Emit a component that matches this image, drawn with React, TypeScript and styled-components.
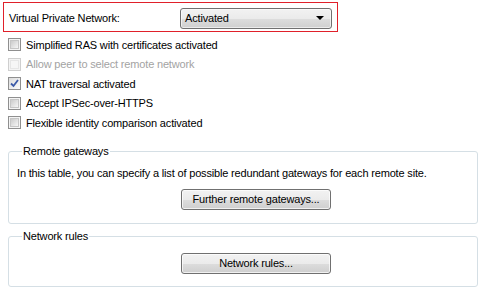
import React from "react";
import styled, { createGlobalStyle } from "styled-components";

const Global = createGlobalStyle`
  html, body { margin: 0; padding: 0; background: #ffffff; }
  body { font-family: "Liberation Sans", Arial, sans-serif; font-size: 11px; color: #000; letter-spacing: -0.17px; }
`;

const Page = styled.div`
  width: 481px;
  height: 291px;
  box-sizing: border-box;
  padding: 2px 3px 0 3px;
  display: flex;
  flex-direction: column;
`;

const Highlight = styled.div`
  width: 335px;
  height: 30px;
  box-sizing: border-box;
  border: 1px solid #e0202a;
  display: flex;
  align-items: center;
  padding: 0 5px 0 5px;
  justify-content: space-between;
`;

const Label = styled.span`
  font-size: 11px;
  padding-top: 1px;
`;

const Select = styled.div`
  width: 152px;
  height: 21px;
  box-sizing: border-box;
  border: 1px solid #707070;
  border-radius: 3px;
  background: linear-gradient(#f2f2f2 0%, #ebebeb 50%, #dddddd 51%, #cfcfcf 100%);
  display: flex;
  align-items: center;
  justify-content: space-between;
  padding: 0 7px 0 4px;
  margin-top: 2px;
  box-shadow: inset 0 0 0 1px rgba(255,255,255,0.6);
`;

const Arrow = styled.span`
  width: 0;
  height: 0;
  border-left: 4px solid transparent;
  border-right: 4px solid transparent;
  border-top: 4px solid #000;
`;

const Checks = styled.div`
  display: flex;
  flex-direction: column;
  padding: 3px 0 0 5px;
`;

const Row = styled.label<{ $disabled?: boolean }>`
  height: 19.5px;
  display: flex;
  align-items: center;
  gap: 5px;
  color: ${(p) => (p.$disabled ? "#a3a3a3" : "#000")};
`;

const Box = styled.span<{ $disabled?: boolean }>`
  width: 13px;
  height: 13px;
  box-sizing: border-box;
  border: 1px solid ${(p) => (p.$disabled ? "#cfcfcf" : "#8f8f8f")};
  background: #f4f4f4;
  display: flex;
  align-items: center;
  justify-content: center;
  flex: none;
  &::before {
    content: "";
    width: 9px;
    height: 9px;
    box-sizing: border-box;
    border: 1px solid ${(p) => (p.$disabled ? "#e6e6e6" : "#c6c6c6")};
    background: ${(p) =>
      p.$disabled ? "#f6f6f6" : "linear-gradient(135deg, #cbcbcb, #f6f6f6)"};
  }
`;

const CheckedBox = styled.span`
  width: 13px;
  height: 13px;
  box-sizing: border-box;
  border: 1px solid #8f8f8f;
  background: linear-gradient(135deg, #dcdcdc, #fafafa);
  display: flex;
  align-items: center;
  justify-content: center;
  flex: none;
`;

const Group = styled.fieldset<{ $h: number; $mt: number }>`
  margin: ${(p) => p.$mt}px 0 0 5px;
  width: 470px;
  height: ${(p) => p.$h}px;
  box-sizing: border-box;
  border: 1px solid #d5dfe5;
  border-radius: 3px;
  padding: 0 8px;
  display: flex;
  flex-direction: column;
  align-items: flex-start;
`;

const Legend = styled.legend`
  font-size: 11px;
  padding: 0 1px;
  margin-left: 5px;
  line-height: 13px;
`;

const Text = styled.p`
  margin: 9px 0 0 0;
  line-height: 13px;
`;

const ButtonRow = styled.div<{ $mt: number }>`
  width: 100%;
  display: flex;
  justify-content: flex-start;
  padding-left: 164px;
  box-sizing: border-box;
  margin-top: ${(p) => p.$mt}px;
`;

const Button = styled.button`
  width: 150px;
  height: 21px;
  box-sizing: border-box;
  border: 1px solid #707070;
  border-radius: 3px;
  background: linear-gradient(#f2f2f2 0%, #ebebeb 50%, #dddddd 51%, #cfcfcf 100%);
  box-shadow: inset 0 0 0 1px rgba(255,255,255,0.7);
  font-family: "Liberation Sans", Arial, sans-serif;
  font-size: 11px;
  letter-spacing: -0.17px;
  color: #000;
  padding: 0;
`;

const items: { label: string; checked?: boolean; disabled?: boolean }[] = [
  { label: "Simplified RAS with certificates activated" },
  { label: "Allow peer to select remote network", disabled: true },
  { label: "NAT traversal activated", checked: true },
  { label: "Accept IPSec-over-HTTPS" },
  { label: "Flexible identity comparison activated" },
];

export default function App() {
  return (
    <>
      <Global />
      <Page>
        <Highlight>
          <Label>Virtual Private Network:</Label>
          <Select>
            <span>Activated</span>
            <Arrow />
          </Select>
        </Highlight>
        <Checks>
          {items.map((it) => (
            <Row key={it.label} $disabled={it.disabled}>
              {it.checked ? (
                <CheckedBox>
                  <svg width="9" height="9" viewBox="0 0 9 9">
                    <path d="M1 4.5 L3.5 7 L8 1" fill="none" stroke="#3b5aa8" strokeWidth="1.8" />
                  </svg>
                </CheckedBox>
              ) : (
                <Box $disabled={it.disabled} />
              )}
              <span>{it.label}</span>
            </Row>
          ))}
        </Checks>
        <Group $h={79} $mt={12}>
          <Legend>Remote gateways</Legend>
          <Text>In this table, you can specify a list of possible redundant gateways for each remote site.</Text>
          <ButtonRow $mt={9}>
            <Button>Further remote gateways...</Button>
          </ButtonRow>
        </Group>
        <Group $h={57} $mt={6}>
          <Legend>Network rules</Legend>
          <ButtonRow $mt={10}>
            <Button>Network rules...</Button>
          </ButtonRow>
        </Group>
      </Page>
    </>
  );
}
